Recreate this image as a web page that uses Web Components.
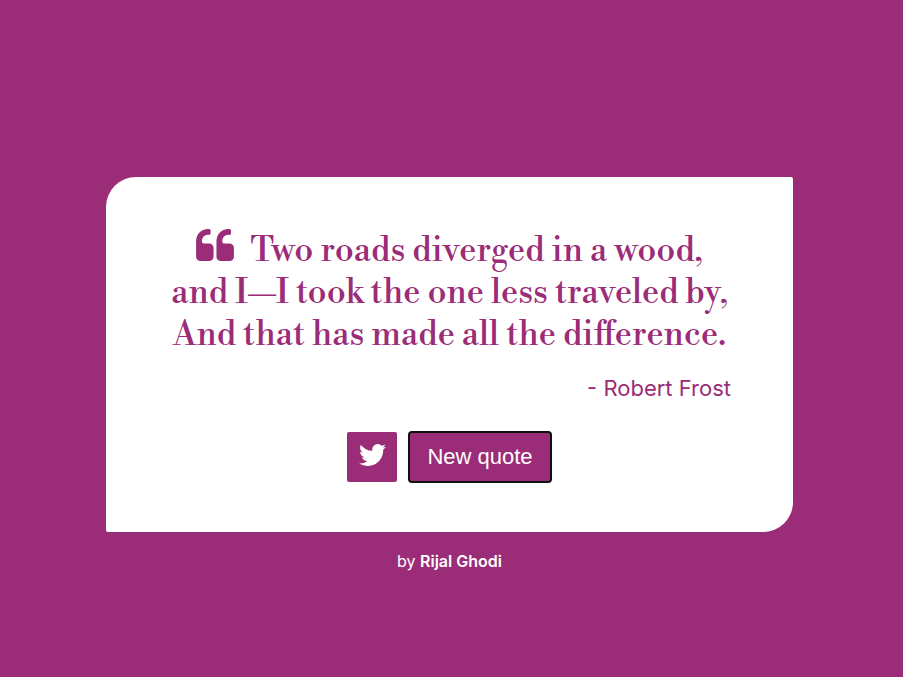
<!DOCTYPE html>
<html lang="en">
<head>
<meta charset="utf-8">
<title>Random Quote Machine</title>
<style>
body{margin:0;background:#9b2c77;color:#9b2c77;font-family:Inter,sans-serif}
</style>
</head>
<body>
<quote-page>
<quote-card>
<quote-text slot="quote">Two roads diverged in a wood,<br>and I—I took the one less traveled by,<br>And that has made all the difference.</quote-text>
<span slot="author">- Robert Frost</span>
<tweet-link slot="actions"></tweet-link>
<new-quote slot="actions">New quote</new-quote>
</quote-card>
<page-credit slot="footer">Rijal Ghodi</page-credit>
</quote-page>
<script>
const define=(name,html)=>customElements.define(name,class extends HTMLElement{
constructor(){super();this.attachShadow({mode:'open'}).innerHTML=html;}
});
define('quote-page',`<style>
:host{display:flex;flex-direction:column;align-items:center;justify-content:center;min-height:100vh;padding:70px 110px 0 106px;box-sizing:border-box}
main{width:100%;max-width:700px}
</style><main><slot></slot></main><slot name="footer"></slot>`);
define('quote-card',`<style>
:host{display:block;box-sizing:border-box;background:#fff;border-radius:30px 2px 30px 2px;padding:52px 62px 49px}
.author{text-align:right;font-size:22px;line-height:28px;margin:18px 0 29px}
.actions{display:flex;justify-content:center;align-items:center;gap:11px}
</style><slot name="quote"></slot><div class="author"><slot name="author"></slot></div><div class="actions"><slot name="actions"></slot></div>`);
define('quote-text',`<style>
:host{display:block;text-align:center;font:400 34px/42px "Libre Bodoni","Bodoni Moda","Liberation Serif",serif}
svg{width:38px;height:32px;vertical-align:0;margin-right:16px}
</style><svg viewBox="64 128 1664 1408" fill="currentColor" aria-hidden="true"><path id="mark" d="M832 960v384q0 80-56 136t-136 56h-384q-80 0-136-56t-56-136v-704q0-104 40.500-198.500t109.500-163.500 163.500-109.500 198.500-40.500h64q26 0 45 19t19 45v128q0 26-19 45t-45 19h-64q-106 0-181 75t-75 181v32q0 40 28 68t68 28h224q80 0 136 56t56 136z"/><use href="#mark" x="896"/></svg><slot></slot>`);
define('tweet-link',`<style>
:host{display:block}
a{display:grid;place-items:center;width:50px;height:50px;background:#9b2c77;color:#fff;border-radius:2px}
svg{width:27px;height:22px;margin-bottom:4px}
</style><a href="#tweet" aria-label="Tweet this quote"><svg viewBox="108 256 1576 1280" fill="currentColor" aria-hidden="true"><path d="M1684 408q-67 98-162 167 1 14 1 42 0 130-38 259.500t-115.500 248.500-184.500 210.500-258 146-323 54.500q-271 0-496-145 35 4 78 4 225 0 401-138-105-2-188-64.500t-114-159.500q33 5 61 5 43 0 85-11-112-23-185.500-111.500t-73.500-205.500v-4q68 38 146 41-66-44-105-115t-39-154q0-88 44-163 121 149 294.500 238.500t371.500 99.500q-8-38-8-74 0-134 94.500-228.500t228.500-94.500q140 0 236 102 109-21 205-78-37 115-142 178 93-10 186-50z"/></svg></a>`);
define('new-quote',`<style>
:host{display:block}
button{display:block;min-height:52px;padding:0 17px;border:2px solid #101010;border-radius:4px;background:#9b2c77;color:#fff;font:22px/28px "Liberation Sans",Arial,sans-serif}
</style><button type="button"><slot></slot></button>`);
define('page-credit',`<style>
:host{display:block;margin-top:19px;color:#fff;font-size:16px;line-height:20px}
a{color:inherit;text-decoration:none;font-weight:600}
</style>by <a href="#author"><slot></slot></a>`);
</script>
</body>
</html>
